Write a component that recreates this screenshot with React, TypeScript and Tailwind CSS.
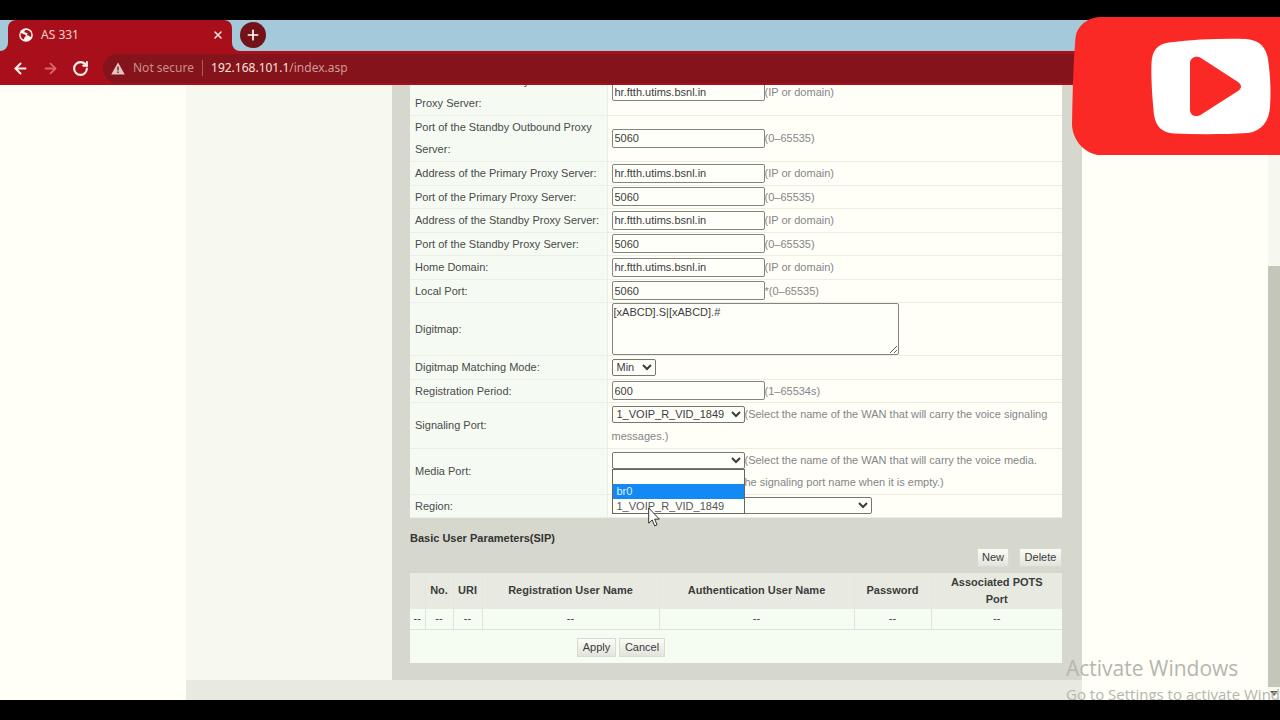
import type { ReactNode } from "react";
import { ArrowLeft, ArrowRight, Plus, RotateCw, X } from "lucide-react";

type FieldRowProps = {
  id: string;
  label: string;
  children: ReactNode;
  height?: string;
};

const FieldRow = ({ id, label, children, height = "h-6" }: FieldRowProps) => (
  <tr className={height}>
    <th
      scope="row"
      className="border-r border-b border-[#eceee5] bg-[#f5fbf2] py-0 pr-0 pl-[5px] text-left font-normal"
    >
      <label htmlFor={id}>{label}</label>
    </th>
    <td className="border-b border-[#eceee5] bg-[#fffff8] py-0 pr-0 pl-1">
      {children}
    </td>
  </tr>
);

type TextFieldProps = { id: string; value: string; hint: string };

const TextField = ({ id, value, hint }: TextFieldProps) => (
  <div className="flex items-center">
    <input
      id={id}
      type="text"
      defaultValue={value}
      className="h-[19px] w-[153px] rounded-xs border border-[#85857f] bg-[#fffffa] px-0.5 text-[11px] text-[#3c3c3c]"
    />
    <span className="text-[#85858a]">{hint}</span>
  </div>
);

const selectClass =
  "h-[17px] rounded-xs border border-[#77776f] bg-[#fffffa] text-[11px] leading-none text-[#3c3c3c] align-middle";

const proxyRows = [
  { id: "outAddr", label: "Address of the Standby Outbound Proxy Server:", value: "hr.ftth.utims.bsnl.in", hint: "(IP or domain)", height: "h-[46px]" },
  { id: "outPort", label: "Port of the Standby Outbound Proxy Server:", value: "5060", hint: "(0–65535)", height: "h-[46px]" },
  { id: "priAddr", label: "Address of the Primary Proxy Server:", value: "hr.ftth.utims.bsnl.in", hint: "(IP or domain)", height: "h-6" },
  { id: "priPort", label: "Port of the Primary Proxy Server:", value: "5060", hint: "(0–65535)", height: "h-[23px]" },
  { id: "stbAddr", label: "Address of the Standby Proxy Server:", value: "hr.ftth.utims.bsnl.in", hint: "(IP or domain)", height: "h-6" },
  { id: "stbPort", label: "Port of the Standby Proxy Server:", value: "5060", hint: "(0–65535)", height: "h-[23px]" },
  { id: "domain", label: "Home Domain:", value: "hr.ftth.utims.bsnl.in", hint: "(IP or domain)", height: "h-6" },
  { id: "localPort", label: "Local Port:", value: "5060", hint: "*(0–65535)", height: "h-[23px]" },
];

const GlobeIcon = () => (
  <svg viewBox="0 0 14 14" className="size-3.5">
    <circle cx="7" cy="7" r="6.8" fill="#fff4ee" />
    <path
      d="M1.600 5.200C3.500 5 4.200 6.200 5.600 6.600c1.600.4 1.400 2 .3 2.400-.8.4-.5 1.600-1.300 2.600C2.800 10.800 1.300 8.600 1.600 5.200ZM6.200 2.200C8.500 1.600 10.600 2.600 11.800 4.600c.8 1.600.6 3.200 0 4.400-.8-.2-1.400-1.200-2.600-1.400C7.600 7.200 8 5.800 8.800 5.400 7.800 4.600 6.200 5 5.600 4.200c-.4-.8 0-1.600.6-2Z"
      fill="#a80f1a"
    />
  </svg>
);

const BrowserHeader = () => (
  <header className="shrink-0 bg-[#a80f1a] font-['Noto_Sans',sans-serif] text-[12px]">
    <div className="flex h-[31px]">
      <div className="w-2 rounded-br-lg bg-[#a3c9da]" />
      <div className="w-56 bg-linear-to-b from-[#a3c9da] from-50% to-[#a80f1a] to-50%">
        <div className="flex h-full items-center rounded-t-lg bg-[#a80f1a] pr-2 pb-0.5 pl-[11px] text-[#f3d6cf]">
          <GlobeIcon />
          <span className="ml-2 flex-1">AS 331</span>
          <button type="button" aria-label="Close tab" className="text-[#ffe9e2]">
            <X size={12} strokeWidth={3} />
          </button>
        </div>
      </div>
      <div className="flex flex-1 items-center rounded-bl-lg bg-[#a3c9da] pb-0.5 pl-2">
        <button
          type="button"
          aria-label="New tab"
          className="flex size-[26px] items-center justify-center rounded-full bg-[#74121a] text-white"
        >
          <Plus size={16} strokeWidth={2.5} />
        </button>
      </div>
    </div>
    <nav className="flex h-[34px] items-center pl-3">
      <button type="button" aria-label="Back" className="text-[#fff1eb]">
        <ArrowLeft size={17} strokeWidth={2.8} />
      </button>
      <button type="button" aria-label="Forward" className="ml-[13px] text-[#d9666a]">
        <ArrowRight size={17} strokeWidth={2.5} />
      </button>
      <button type="button" aria-label="Reload" className="ml-[13px] text-[#fff1eb]">
        <RotateCw size={17} strokeWidth={3} />
      </button>
      <div className="ml-3.5 flex h-[29px] flex-1 items-center rounded-l-full bg-[#84131b] pl-2">
        <svg viewBox="0 0 14 13" className="h-[13px] w-3.5">
          <path d="M7 .5 13.8 12.5H.2Z" fill="#e2c5c0" />
          <path d="M6.3 4.5h1.4v4H6.3ZM6.3 9.5h1.4v1.4H6.3Z" fill="#84131b" />
        </svg>
        <span className="ml-2 text-[#c9908e]">Not secure</span>
        <span className="mx-2 h-4 w-px bg-[#a85a5c]" />
        <p className="text-[#d39a98]">
          <span className="text-[#f8e3de]">192.168.101.1</span>/index.asp
        </p>
      </div>
    </nav>
  </header>
);

const SettingsTable = () => (
  <table className="w-full table-fixed text-[11px] leading-[22px] text-[#4a4a4a]">
    <colgroup>
      <col className="w-[197px]" />
      <col />
    </colgroup>
    <tbody>
      {proxyRows.map((row) => (
        <FieldRow key={row.id} id={row.id} label={row.label} height={row.height}>
          <TextField id={row.id} value={row.value} hint={row.hint} />
        </FieldRow>
      ))}
      <FieldRow id="digitmap" label="Digitmap:" height="h-[53px]">
        <textarea
          id="digitmap"
          defaultValue="[xABCD].S|[xABCD].#"
          className="block h-[52px] w-[287px] resize rounded-xs border border-[#85857f] bg-[#fffffa] px-px py-0.5 text-[11px] leading-[13px] text-[#3c3c3c]"
        />
      </FieldRow>
      <FieldRow id="mode" label="Digitmap Matching Mode:" height="h-6">
        <select id="mode" className={`${selectClass} block w-11`}>
          <option>Min</option>
          <option>Max</option>
        </select>
      </FieldRow>
      <FieldRow id="period" label="Registration Period:" height="h-[23px]">
        <TextField id="period" value="600" hint="(1–65534s)" />
      </FieldRow>
      <FieldRow id="signaling" label="Signaling Port:" height="h-[46px]">
        <div className="flex items-center">
          <select id="signaling" className={`${selectClass} w-[133px]`}>
            <option>1_VOIP_R_VID_1849</option>
          </select>
          <span className="text-[#85858a]">
            (Select the name of the WAN that will carry the voice signaling
          </span>
        </div>
        <p className="text-[#85858a]">messages.)</p>
      </FieldRow>
      <FieldRow id="media" label="Media Port:" height="h-[46px]">
        <div className="relative text-[#85858a]">
          <div className="flex items-center">
            <select id="media" className={`${selectClass} w-[133px]`}>
              <option />
              <option>br0</option>
              <option>1_VOIP_R_VID_1849</option>
            </select>
            <span>(Select the name of the WAN that will carry the voice media.</span>
          </div>
          <p className="pl-[133px]">he signaling port name when it is empty.)</p>
          <ul
            role="listbox"
            aria-label="Media Port"
            className="absolute top-5 left-0 z-10 w-[133px] border border-[#66665f] bg-[#fffffa] text-[11px] leading-[15px] text-[#55555a]"
          >
            <li role="option" aria-selected={false} className="h-3.5" />
            <li role="option" aria-selected className="bg-[#1489f5] pl-1 text-[#d9f0ff]">
              br0
            </li>
            <li role="option" aria-selected={false} className="h-3.5 pl-1">
              1_VOIP_R_VID_1849
            </li>
          </ul>
          <svg viewBox="0 0 12 20" className="absolute top-[58px] left-9 z-20 h-5 w-3">
            <path
              d="M.7.9v15.300l3.500-3.300 2.500 6 2.400-1-2.500-5.800h4.700Z"
              fill="#fff"
              stroke="#333"
              strokeWidth="1"
            />
          </svg>
        </div>
      </FieldRow>
      <FieldRow id="region" label="Region:" height="h-[23px]">
        <select id="region" className={`${selectClass} block w-[260px]`}>
          <option />
        </select>
      </FieldRow>
    </tbody>
  </table>
);

const userColumns = [
  { title: "", width: "w-[15px]" },
  { title: "No.", width: "w-7" },
  { title: "URI", width: "w-[29px]" },
  { title: "Registration User Name", width: "w-[177px]" },
  { title: "Authentication User Name", width: "w-[195px]" },
  { title: "Password", width: "w-[77px]" },
  { title: "Associated POTS Port", width: "" },
];

const buttonClass =
  "h-[19px] border border-[#d9dbd2] bg-linear-to-b from-[#fbfcf6] to-[#e2e4dc] text-[11px] leading-none text-[#3c3c3c]";

const UserTable = () => (
  <section className="text-[11px]">
    <h2 className="pt-3 font-bold leading-4 text-[#333333]">
      Basic User Parameters(SIP)
    </h2>
    <div className="mt-0.5 mb-1.5 flex justify-end gap-2.5">
      <button type="button" className={`${buttonClass} w-8`}>
        New
      </button>
      <button type="button" className={`${buttonClass} w-[43px]`}>
        Delete
      </button>
    </div>
    <div className="bg-[#f5fcf2]">
      <table className="w-full table-fixed text-center text-[#3c3c3c]">
        <thead>
          <tr className="h-9 bg-[#e8eae1]">
            {userColumns.map((col, i) => (
              <th
                key={i}
                scope="col"
                className={`${col.width} border-r border-[#e4e7dd] p-0 leading-[17px] last:border-r-0 last:px-4`}
              >
                {col.title}
              </th>
            ))}
          </tr>
        </thead>
        <tbody>
          <tr className="h-[21px]">
            {userColumns.map((_, i) => (
              <td
                key={i}
                className="border-r border-b border-[#dfe4d9] p-0 leading-none last:border-r-0"
              >
                --
              </td>
            ))}
          </tr>
        </tbody>
      </table>
      <div className="flex gap-[3px] pt-2 pb-1.5 pl-[167px]">
        <button type="button" className={`${buttonClass} w-[39px]`}>
          Apply
        </button>
        <button type="button" className={`${buttonClass} w-[46px]`}>
          Cancel
        </button>
      </div>
    </div>
  </section>
);

const Scrollbar = () => (
  <div className="flex w-3 shrink-0 flex-col bg-[#f6f7ee]">
    <div className="flex-3" />
    <div className="flex-7 bg-[#c5c6ba]" />
    <div className="flex h-[13px] items-center justify-center">
      <svg viewBox="0 0 8 5" className="h-[5px] w-2">
        <path d="M0 0h8L4 5Z" fill="#5c5c57" />
      </svg>
    </div>
  </div>
);

const VideoBadge = () => (
  <svg
    viewBox="0 0 208 139"
    className="absolute top-4 right-0 z-30 h-[139px] w-52"
    role="img"
    aria-label="Video"
  >
    <path
      d="M208 1H27C15 2 5 10 3.500 21.500 1 50 .5 80 0 109c1 16 13 29 29 30.500h179Z"
      fill="#fa2925"
    />
    <path
      d="M97 26.500C125 23 150 22.500 174 23c14 1 20 9 22 20 2.500 18 3 32 2 48-1 14-8 24-22 26-24 1.500-50 1.500-74 .5C90 116.500 84 111 82 99c-2-20-3-36-2.500-52C80 34 86 28 97 26.500Z"
      fill="#fff"
    />
    <path
      d="M118 47c0-5 6-8 11-5l37 24c4 3 4 6 0 9l-36 23c-5 4-12 2-12-4Z"
      fill="#fa2925"
    />
  </svg>
);

const App = () => {
  return (
    <div className="relative flex h-screen flex-col overflow-hidden bg-black py-5 font-['Liberation_Sans',Arial,sans-serif]">
      <BrowserHeader />
      <div className="relative flex min-h-0 flex-1 overflow-hidden bg-[#fffff8]">
        <main className="min-w-0 flex-1 overflow-hidden">
          {/* page is scrolled, the first row starts above the visible area */}
          <div className="mx-auto -mt-4 max-w-[896px]">
            <div className="flex">
              <aside className="w-[206px] shrink-0 bg-[#f7f9f1]" />
              <div className="flex-1 bg-[#d6d8ce] pr-5 pb-[17px] pl-[18px]">
                <SettingsTable />
                <UserTable />
              </div>
            </div>
            <footer className="h-10 bg-[#e8eae1]" />
          </div>
        </main>
        <Scrollbar />
        <div className="absolute right-0 bottom-0 h-12 w-[214px] overflow-hidden font-['Open_Sans','Noto_Sans',sans-serif] whitespace-nowrap text-[#b5b6ae]">
          <p className="text-[21px] leading-8">Activate Windows</p>
          <p className="text-[15px] leading-5">Go to Settings to activate Windows.</p>
        </div>
      </div>
      <VideoBadge />
    </div>
  );
};

export default App;
